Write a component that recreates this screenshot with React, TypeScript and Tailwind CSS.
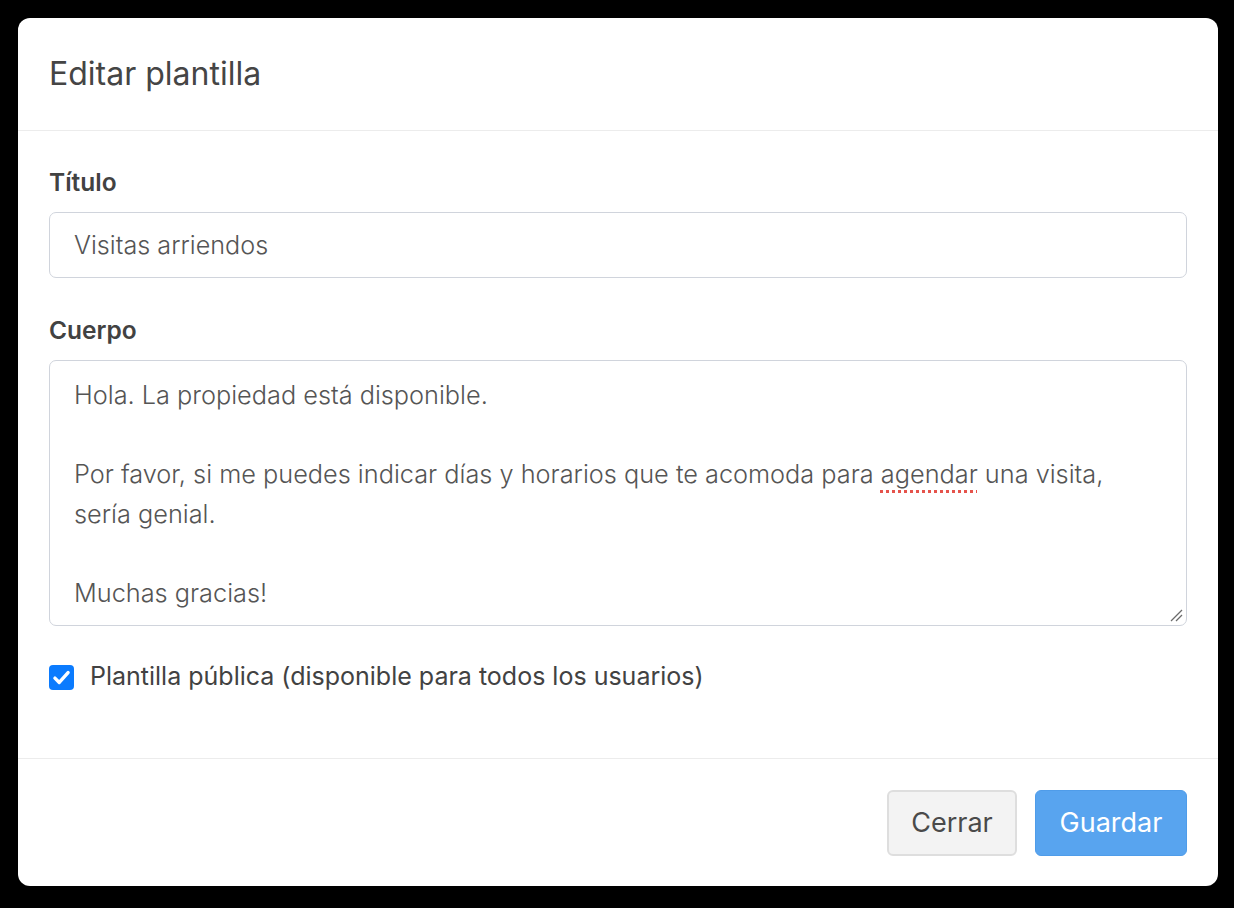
import React, { useState } from "react";

const lines = [
  "Hola. La propiedad está disponible.",
  "",
  "SPELL",
  "sería genial.",
  "",
  "Muchas gracias!",
];

export default function App() {
  const [titulo, setTitulo] = useState("Visitas arriendos");
  const [publica, setPublica] = useState(true);

  return (
    <div className="bg-black h-[908px] w-[1234px] pt-[18px] pl-[18px] font-['Inter',sans-serif]">
      <div className="bg-white w-[1200px] h-[868px] rounded-[12px] flex flex-col overflow-hidden">
        <header className="h-[113px] px-[31px] flex items-center border-b border-[#ececec]">
          <h1 className="text-[32px] text-[#454545] font-normal">Editar plantilla</h1>
        </header>

        <div className="flex-1 px-[31px] pt-[33px]">
          <label className="block text-[24.5px] leading-[36px] font-semibold text-[#424242] mb-[12px]">Título</label>
          <input
            value={titulo}
            onChange={e => setTitulo(e.target.value)}
            className="w-full h-[66px] border border-[#d0d4dc] rounded-[7px] px-[24px] text-[25.2px] text-[#555] font-light focus:outline-none"
          />

          <label className="block text-[24.5px] leading-[36px] font-semibold text-[#424242] mt-[34px] mb-[12px]">Cuerpo</label>
          <div className="relative w-full h-[266px] border border-[#d0d4dc] rounded-[7px] px-[24px] pt-[14px] text-[25.3px] leading-[39.5px] text-[#555] font-light">
            {lines.map((l, i) =>
              l === "SPELL" ? (
                <div key={i} className="whitespace-pre">
                  Por favor, si me puedes indicar días y horarios que te acomoda para{" "}
                  <span className="underline decoration-dotted decoration-[#e5534b] decoration-[2.5px] underline-offset-[7px]">agendar</span>{" "}
                  una visita,
                </div>
              ) : (
                <div key={i} className="whitespace-pre h-[39.5px]">{l}</div>
              )
            )}
            <svg className="absolute right-[3px] bottom-[3px]" width="14" height="14" viewBox="0 0 14 14">
              <line x1="2" y1="13" x2="13" y2="2" stroke="#6b6b6b" strokeWidth="1.3" />
              <line x1="7" y1="13" x2="13" y2="7" stroke="#6b6b6b" strokeWidth="1.3" />
            </svg>
          </div>

          <div className="flex items-center gap-[16px] mt-[33px] h-[36px] cursor-pointer" onClick={() => setPublica(!publica)}>
            <div className={`w-[25px] h-[25px] rounded-[4px] flex items-center justify-center ${publica ? "bg-[#0b7bfe]" : "border border-[#999] bg-white"}`}>
              {publica && (
                <svg width="21" height="21" viewBox="0 0 16 16">
                  <path d="M3 8.5 L6.3 11.8 L13 4.3" fill="none" stroke="white" strokeWidth="2.6" strokeLinecap="round" strokeLinejoin="round" />
                </svg>
              )}
            </div>
            <span className="text-[25px] text-[#424242] font-normal">Plantilla pública (disponible para todos los usuarios)</span>
          </div>
        </div>

        <footer className="h-[128px] border-t border-[#ececec] flex justify-end items-start pt-[31px] pr-[31px] gap-[18px]">
          <button className="h-[66px] w-[130px] rounded-[6px] border-2 border-[#dedede] bg-[#f3f3f3] text-[27px] text-[#4a4a4a]">Cerrar</button>
          <button className="h-[66px] w-[152px] rounded-[6px] border border-[#4f9ce9] bg-[#58a4ef] text-[27px] text-white">Guardar</button>
        </footer>
      </div>
    </div>
  );
}
